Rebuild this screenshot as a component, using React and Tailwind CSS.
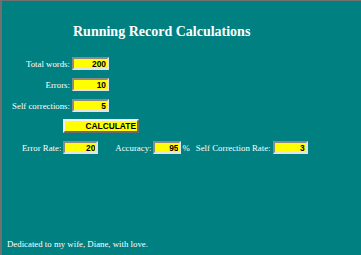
import React from 'react';

function Field({ value, width }) {
  return (
    <input
      readOnly
      value={value}
      className={`${width} h-[13px] shrink-0 bg-[#ffff00] border-2 border-t-[#8a8a8a] border-l-[#8a8a8a] border-r-[#e4e4e4] border-b-[#e4e4e4] pr-[1px] text-right text-black font-bold font-['Liberation_Sans',Arial,sans-serif] text-[8.4px] leading-none outline-none`}
    />
  );
}

function InputRow({ label, value }) {
  return (
    <div className="flex items-center h-[13px]">
      <span className="w-[68px] text-right whitespace-nowrap">{label}</span>
      <div className="ml-[2px]">
        <Field value={value} width="w-[37px]" />
      </div>
    </div>
  );
}

export default function App() {
  return (
    <div className="w-[361px] h-[255px] bg-[#008080] border-t border-l-2 border-[#707070] flex flex-col text-white font-['Liberation_Serif','Times_New_Roman',serif] text-[8.8px] leading-[10px] overflow-hidden">
      <h1 className="pt-[23px] pl-[71px] text-[14px] leading-[16px] font-bold whitespace-nowrap">
        Running Record Calculations
      </h1>

      <div className="mt-[17px] flex flex-col gap-[8px]">
        <InputRow label="Total words:" value="200" />
        <InputRow label="Errors:" value="10" />
        <InputRow label="Self corrections:" value="5" />
      </div>

      <div className="mt-[7px] pl-[61px]">
        <button className="w-[76px] h-[14px] bg-[#ffff00] border-2 border-t-[#f2f2f2] border-l-[#f2f2f2] border-r-[#6a6a6a] border-b-[#6a6a6a] text-right pr-[1px] text-black font-bold font-['Liberation_Sans',Arial,sans-serif] text-[8.4px] leading-none">
          CALCULATE
        </button>
      </div>

      <div className="mt-[8px] pl-[20px] flex items-center h-[13px] whitespace-nowrap">
        <span>Error Rate:</span>
        <div className="ml-[2px]">
          <Field value="20" width="w-[35px]" />
        </div>
        <span className="ml-[17px]">Accuracy:</span>
        <div className="ml-[2px]">
          <Field value="95" width="w-[28px]" />
        </div>
        <span className="ml-[1px]">%</span>
        <span className="ml-[6px]">Self Correction Rate:</span>
        <div className="ml-[2px]">
          <Field value="3" width="w-[35px]" />
        </div>
      </div>

      <p className="mt-auto pl-[5px] pb-[6px] whitespace-nowrap">
        Dedicated to my wife, Diane, with love.
      </p>
    </div>
  );
}
